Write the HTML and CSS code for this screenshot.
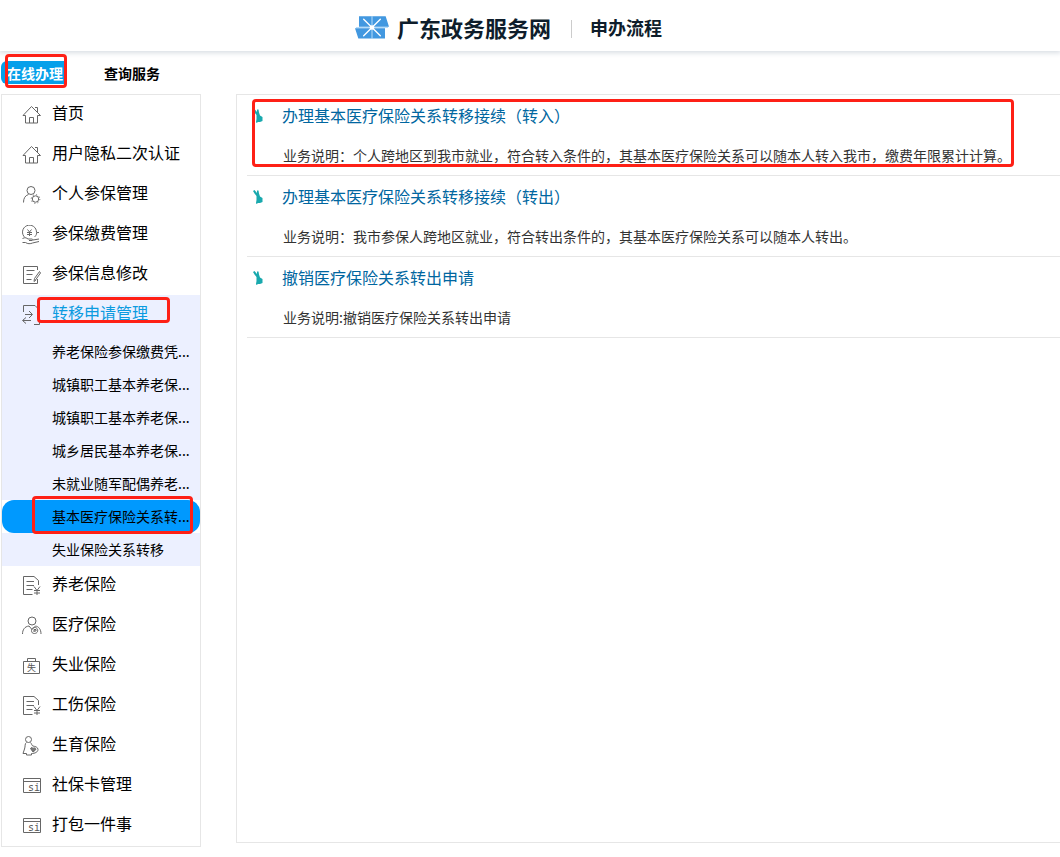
FILE: index.html
```html
<!DOCTYPE html>
<html lang="zh-CN">
<head>
<meta charset="utf-8">
<title>广东政务服务网 - 申办流程</title>
<link rel="stylesheet" href="styles.css">
</head>
<body>
<svg class="defs" aria-hidden="true">
  <symbol id="home" viewBox="0 0 20 20"><path d="M1 10.500 9.500 1.500l9 9H15.500v7.500H3.500V10.500H1M13 2.500h2.500V7.500M7.500 18v-5.500h4V18"/></symbol>
  <symbol id="user-gear" viewBox="0 0 20 20"><circle cx="9" cy="5.500" r="4"/><path d="M1.500 17.500c0-4 1.500-7 5-8"/><circle cx="13.500" cy="14" r="3.200"/><circle cx="13.500" cy="14" r="4.300" stroke-dasharray="1.200 2.178"/></symbol>
  <symbol id="pay" viewBox="0 0 20 20"><path d="M3 12.500A7 7 0 1 1 14.500 7.500h2.500M12.500 12c1-1 2-2 2.200-4"/><path d="m5.500 4.500 2 2.500 2-2.500M7.500 7V11M5 7.500h5M5 9.500h5M.5 13.500c3-1.500 4-.5 5.500.5h4c1 0 1 1.500 0 1.500H7M11 15l6-1M.5 17.500h3c2 1.500 5 1.500 7 .5l6.500-1.500"/></symbol>
  <symbol id="edit" viewBox="0 0 20 20"><path d="M15.500 5V1.500h-14v17h14V14M4.500 5.500h8M4.500 9.500h6M4.500 14.500h5"/><path d="m17.500 6.500-5 7M18.500 8l-5 7M17.500 6.500l1 1.500M12.500 13.500l-.5 3 2-1.500"/></symbol>
  <symbol id="transfer" viewBox="0 0 20 20"><path d="M1.500 7V.5H13l4 4M3 9.500h7M7 6l3.500 3.500L7 13M9 15.500H1M4 12.500l-3.500 3L4 18.500M12 19.500h5.500V14"/></symbol>
  <symbol id="bill" viewBox="0 0 20 20"><path d="M10.500 18.500h-9V.5H12l4.500 4V9M4.500 5.500H12M4.500 9.500H12M4.500 13.500h6"/><path d="m12 10.500 3 4 3-4M15 14v5M12 14.500h6M12 17h6"/></symbol>
  <symbol id="care" viewBox="0 0 20 20"><circle cx="10" cy="5" r="4"/><path d="M.5 18c0-4 2-7.500 6.500-8l3 3.500 3.500-3.500c3 .5 5.500 3 5.500 8"/><path d="M9.500 14.500c0-3 4-4 5.500-2s.5 5-2.500 5c-2 0-3-1-3-3M12 16v-2.500h2V15h-2"/></symbol>
  <symbol id="mother" viewBox="0 0 20 20"><circle cx="6.500" cy="3.500" r="3"/><path d="M4.500 6.500c-2 1-1 4-2 6.500L1 17.500h3.500v1.500h5v-1.500M8.500 6.500c1.500 1.500 1 3 2.500 3.500 2 .5 5 1 5 3.500s-3 4-6.500 4"/><path d="M8.500 12.500c1-1.500 2-1 2.500 0 1.500-1.500 3.500 0 2.500 1.500L11 16z" fill="#777"/></symbol>
  <symbol id="figure" viewBox="0 0 10 14"><path d="m0 1 1.500-1L4 3V.5h1.500L6 3.500l1 3L9.500 8v4L7 13H5l-1.500 1-.5-1 .5-3V6L1.500 3.500z"/></symbol>
</svg>

<header class="header">
  <svg class="logo" viewBox="0 0 102 68" aria-hidden="true">
    <path fill="#4298e0" d="M12 0h80l10 32H12zM0 36h90v31H10z"/>
    <path stroke="#fff" stroke-width="4" stroke-linecap="round" d="M26 9l50 50M76 9 26 59"/>
    <path stroke="#b5dcfa" stroke-width="3" d="M51 0v68M3 34h96"/>
    <circle cx="51" cy="34" r="7" fill="#fff"/>
  </svg>
  <h1 class="site">广东政务服务网</h1>
  <span class="section">申办流程</span>
</header>

<nav class="tabs">
  <button type="button" class="tab tab-on">在线办理</button>
  <button type="button" class="tab">查询服务</button>
</nav>

<div class="layout">
  <nav class="side">
    <a class="item" href="#"><svg class="icon"><use href="#home"/></svg><span>首页</span></a>
    <a class="item" href="#"><svg class="icon"><use href="#home"/></svg><span>用户隐私二次认证</span></a>
    <a class="item" href="#"><svg class="icon"><use href="#user-gear"/></svg><span>个人参保管理</span></a>
    <a class="item" href="#"><svg class="icon"><use href="#pay"/></svg><span>参保缴费管理</span></a>
    <a class="item" href="#"><svg class="icon"><use href="#edit"/></svg><span>参保信息修改</span></a>
    <div class="group">
      <a class="item item-on" href="#"><svg class="icon"><use href="#transfer"/></svg><span>转移申请管理</span></a>
      <a class="sub" href="#">养老保险参保缴费凭...</a>
      <a class="sub" href="#">城镇职工基本养老保...</a>
      <a class="sub" href="#">城镇职工基本养老保...</a>
      <a class="sub" href="#">城乡居民基本养老保...</a>
      <a class="sub" href="#">未就业随军配偶养老...</a>
      <div class="sub-wrap"><a class="sub sub-on" href="#">基本医疗保险关系转...</a></div>
      <a class="sub" href="#">失业保险关系转移</a>
    </div>
    <a class="item" href="#"><svg class="icon"><use href="#bill"/></svg><span>养老保险</span></a>
    <a class="item" href="#"><svg class="icon"><use href="#care"/></svg><span>医疗保险</span></a>
    <a class="item" href="#"><svg class="icon" viewBox="0 0 20 20"><path d="M1.500 5.500h16v12h-16zM5.500 5.500v-3h8v3"/><text x="5" y="15">失</text></svg><span>失业保险</span></a>
    <a class="item" href="#"><svg class="icon"><use href="#bill"/></svg><span>工伤保险</span></a>
    <a class="item" href="#"><svg class="icon"><use href="#mother"/></svg><span>生育保险</span></a>
    <a class="item" href="#"><svg class="icon" viewBox="0 0 20 20"><path d="M1.500 2.500h17v14h-17zM1.500 5.500h17"/><text class="mono" x="6" y="15">si</text></svg><span>社保卡管理</span></a>
    <a class="item" href="#"><svg class="icon" viewBox="0 0 20 20"><path d="M1.500 2.500h17v14h-17zM1.500 5.500h17"/><text class="mono" x="6" y="15">si</text></svg><span>打包一件事</span></a>
  </nav>

  <main class="main">
    <article class="entry entry-on">
      <svg class="figure"><use href="#figure"/></svg>
      <div class="body">
        <a class="title" href="#">办理基本医疗保险关系转移接续（转入）</a>
        <p class="desc">业务说明：个人跨地区到我市就业，符合转入条件的，其基本医疗保险关系可以随本人转入我市，缴费年限累计计算。</p>
      </div>
    </article>
    <article class="entry">
      <svg class="figure"><use href="#figure"/></svg>
      <div class="body">
        <a class="title" href="#">办理基本医疗保险关系转移接续（转出）</a>
        <p class="desc">业务说明：我市参保人跨地区就业，符合转出条件的，其基本医疗保险关系可以随本人转出。</p>
      </div>
    </article>
    <article class="entry">
      <svg class="figure"><use href="#figure"/></svg>
      <div class="body">
        <a class="title" href="#">撤销医疗保险关系转出申请</a>
        <p class="desc">业务说明:撤销医疗保险关系转出申请</p>
      </div>
    </article>
  </main>
</div>
</body>
</html>
```
FILE: styles.css
```css
* { box-sizing: border-box; }

body {
  margin: 0;
  background: #fff;
  color: #000;
  font-family: "Noto Sans CJK SC", sans-serif;
  font-size: 16px;
}

a { color: inherit; text-decoration: none; }
.defs { position: absolute; width: 0; height: 0; }

.header {
  display: flex;
  justify-content: center;
  align-items: center;
  height: 51px;
  padding: 3px 43px 0 0;
  box-shadow: 0 1px 5px 1px #d9dee4;
}
.logo { width: 34px; height: 23px; margin-right: 8px; fill: none; }
.site {
  margin: 0 20px 0 0;
  color: #0e1d2b;
  font-size: 22px;
  line-height: 32px;
  font-weight: 700;
}
.section {
  position: relative;
  padding-left: 19px;
  color: #0e1d2b;
  font-size: 18px;
  line-height: 28px;
  font-weight: 700;
}
.section::before {
  content: "";
  position: absolute;
  left: 0;
  top: 7px;
  width: 1px;
  height: 18px;
  background: #ccc;
}

.tabs { display: flex; gap: 34px; padding: 10px 0 10px 1px; }
.tab {
  position: relative;
  height: 23px;
  padding: 0 5px;
  border: 0;
  background: none;
  color: #000;
  font: 700 14px/24px "Noto Sans CJK SC", sans-serif;
}
.tab-on {
  padding: 0 2px 0 6px;
  border-radius: 6px 0 0 6px;
  background: #06a0ea;
  color: #fff;
}

/* Red frames that highlight the steps of the procedure */
.tab-on::after,
.item-on span::after,
.sub-on::after,
.entry-on::after {
  content: "";
  position: absolute;
  border: 3px solid #fe2016;
  border-radius: 4px;
  pointer-events: none;
}
.tab-on::after { inset: -7px -2px -4px 4px; }
.item-on span::after { inset: 2px -22px 6px -15px; }
.sub-on::after { inset: -4px 7px -1px 30px; }
.entry-on::after { inset: 4px 46px 8px 5px; }

.layout { display: flex; align-items: flex-start; gap: 35px; padding-left: 1px; }

.side { flex: 0 0 200px; border: 1px solid #e6e6e6; }
.item { display: flex; gap: 10px; height: 40px; padding-left: 20px; }
.item span { position: relative; height: 34px; line-height: 34px; }
.item-on { color: #0b9be0; }
.icon {
  width: 20px;
  height: 20px;
  margin-top: 10px;
  fill: none;
  stroke: #666;
  stroke-width: 1;
}
.icon, .figure { flex: none; overflow: visible; }
text { fill: #555; stroke: none; font: 9px "Noto Sans CJK SC", sans-serif; }
.mono { font: 10px "DejaVu Sans Mono", monospace; }

.group { background: #ecf0ff; }
.sub {
  display: block;
  height: 33px;
  padding-left: 50px;
  font-size: 14px;
  line-height: 33px;
  white-space: nowrap;
}
.sub-wrap { background: #fff; }
.sub-on { position: relative; border-radius: 12px; background: #0099fe; }

.main {
  flex: 1;
  min-width: 0;
  min-height: 749px;
  padding-left: 10px;
  border: 1px solid #e6e6e6;
  border-right: 0;
}
.entry {
  position: relative;
  display: flex;
  gap: 19px;
  padding: 6px 0 6px 6px;
  border-bottom: 1px solid #e6e6e6;
}
.figure { width: 10px; height: 14px; margin-top: 8px; fill: #19a9ae; }
.title { display: block; color: #0066a0; line-height: 28px; }
.desc {
  margin: 12px 0 0 1px;
  color: #333;
  font-size: 14px;
  line-height: 28px;
}
```
